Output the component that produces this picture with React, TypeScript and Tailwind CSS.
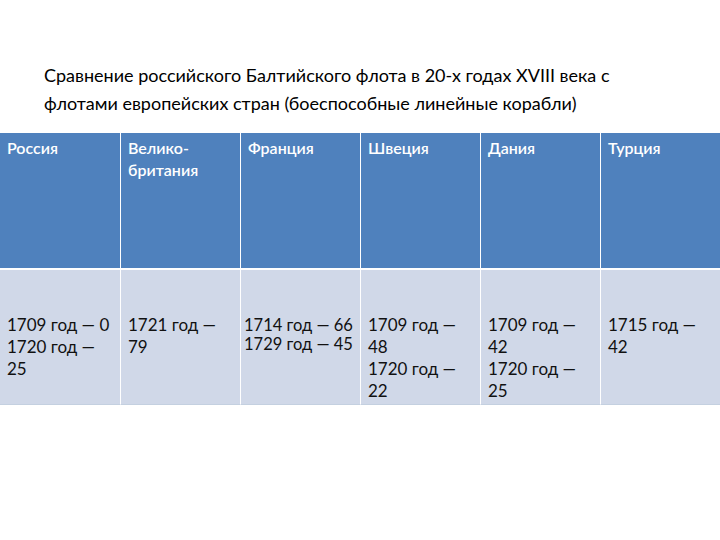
const headers = ["Россия", "Велико-\nбритания", "Франция", "Швеция", "Дания", "Турция"];

const cells: { lines: string[]; tight?: boolean }[] = [
  { lines: ["1709 год — 0", "1720 год —", "25"] },
  { lines: ["1721 год —", "79"] },
  { lines: ["1714 год — 66", "1729 год — 45"], tight: true },
  { lines: ["1709 год —", "48", "1720 год —", "22"] },
  { lines: ["1709 год —", "42", "1720 год —", "25"] },
  { lines: ["1715 год —", "42"] },
];

export default function App() {
  return (
    <div
      className="w-[720px] h-[540px] bg-white overflow-hidden"
      style={{ fontFamily: "Lato, 'Open Sans', sans-serif" }}
    >
      <div className="pt-[61px] pl-[44px] h-[133px] text-[18px] leading-[28px] text-black whitespace-nowrap">
        Сравнение российского Балтийского флота в 20-х годах XVIII века с
        <br />
        флотами европейских стран (боеспособные линейные корабли)
      </div>
      <div className="grid grid-cols-6 w-[720px]">
        {headers.map((h, i) => (
          <div
            key={i}
            className={`h-[135px] bg-[#4f81bd] text-white font-semibold text-[16px] leading-[22px] pt-[4px] pl-[7px] whitespace-pre-line ${
              i > 0 ? "border-l border-white" : ""
            }`}
          >
            {h}
          </div>
        ))}
        {cells.map((c, i) => (
          <div
            key={i}
            className={`h-[137px] bg-[#d0d8e8] text-[#111] border-t-2 border-white border-b border-b-[#c4d0e0] ${
              c.tight
                ? "text-[16.5px] leading-[19px] pt-[46px] pl-[3px]"
                : "text-[17px] leading-[22px] pt-[44px] pl-[7px]"
            } ${i > 0 ? "border-l" : ""}`}
          >
            {c.lines.map((l, j) => (
              <div key={j} className="whitespace-nowrap">
                {l}
              </div>
            ))}
          </div>
        ))}
      </div>
    </div>
  );
}
